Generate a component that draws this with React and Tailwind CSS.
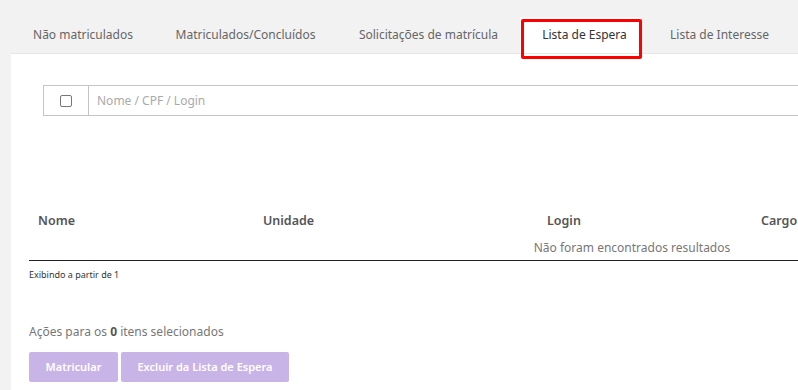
import React from 'react';

const tabs = [
  { label: 'Não matriculados', w: 'w-[142px]' },
  { label: 'Matriculados/Concluídos', w: 'w-[183px]' },
  { label: 'Solicitações de matrícula', w: 'w-[183px]' },
  { label: 'Lista de Espera', w: 'w-[121px]', active: true },
  { label: 'Lista de Interesse', w: 'w-[157px]' },
];

export default function App() {
  return (
    <div
      className="h-[390px] w-[798px] overflow-hidden bg-[#f2f2f2] text-[#555]"
      style={{ fontFamily: '"Noto Sans", "Open Sans", sans-serif' }}
    >
      {/* Abas */}
      <div className="flex h-[53px] items-end pl-[12px]">
        {tabs.map((t) =>
          t.active ? (
            <div key={t.label} className={`relative flex h-[36px] shrink-0 items-start justify-center bg-white pt-[9px] ${t.w}`}>
              <span className="whitespace-nowrap pl-[8px] text-[12px] text-[#333]">{t.label}</span>
              <div className="pointer-events-none absolute left-[1px] right-[-1px] top-[2px] h-[40px] rounded-[2px] border-[3px] border-[#f00]" />
            </div>
          ) : (
            <div key={t.label} className={`flex h-[36px] shrink-0 items-start justify-center pt-[9px] ${t.w}`}>
              <span className="whitespace-nowrap text-[12px] text-[#666]">{t.label}</span>
            </div>
          )
        )}
      </div>

      {/* Painel */}
      <div className="ml-[11px] h-[400px] w-[900px] border-t border-[#e6e6e6] bg-white pl-[18px] pt-[31px]">
        <div className="ml-[14px] flex h-[31px] w-[900px] border border-[#c4c4c4]">
          <div className="flex w-[45px] shrink-0 items-center justify-center border-r border-[#c4c4c4]">
            <div className="h-[12px] w-[12px] rounded-[2px] border border-[#777]" />
          </div>
          <div className="flex items-center pl-[8px] text-[12px] text-[#aaa]">Nome / CPF / Login</div>
        </div>

        <table className="mt-[92px] w-[1206px] table-fixed border-collapse">
          <colgroup>
            <col className="w-[225px]" />
            <col className="w-[284px]" />
            <col className="w-[214px]" />
            <col />
          </colgroup>
          <thead>
            <tr className="h-[27px]">
              <th className="pl-[9px] text-left text-[12.5px] font-semibold text-[#555]">Nome</th>
              <th className="pl-[9px] text-left text-[12.5px] font-semibold text-[#555]">Unidade</th>
              <th className="pl-[9px] text-left text-[12.5px] font-semibold text-[#555]">Login</th>
              <th className="pl-[9px] text-left text-[12.5px] font-semibold text-[#555]">Cargo</th>
            </tr>
          </thead>
          <tbody>
            <tr className="h-[25px] border-b border-[#222]">
              <td colSpan={4} className="pt-[2px] text-center text-[12px] text-[#777]">
                Não foram encontrados resultados
              </td>
            </tr>
          </tbody>
        </table>
        <p className="mt-[7px] text-[9px] text-[#333]">Exibindo a partir de 1</p>

        <p className="mt-[42px] text-[12px] text-[#777]">
          Ações para os <span className="font-bold text-[#555]">0</span> itens selecionados
        </p>
        <div className="mt-[11px] flex gap-[3px]">
          <button type="button" className="h-[30px] w-[89px] rounded-[2px] bg-[#c8b4e7] text-[11px] font-semibold text-white">
            Matricular
          </button>
          <button type="button" className="h-[30px] w-[168px] rounded-[2px] bg-[#c8b4e7] text-[11px] font-semibold text-white">
            Excluir da Lista de Espera
          </button>
        </div>
      </div>
    </div>
  );
}
